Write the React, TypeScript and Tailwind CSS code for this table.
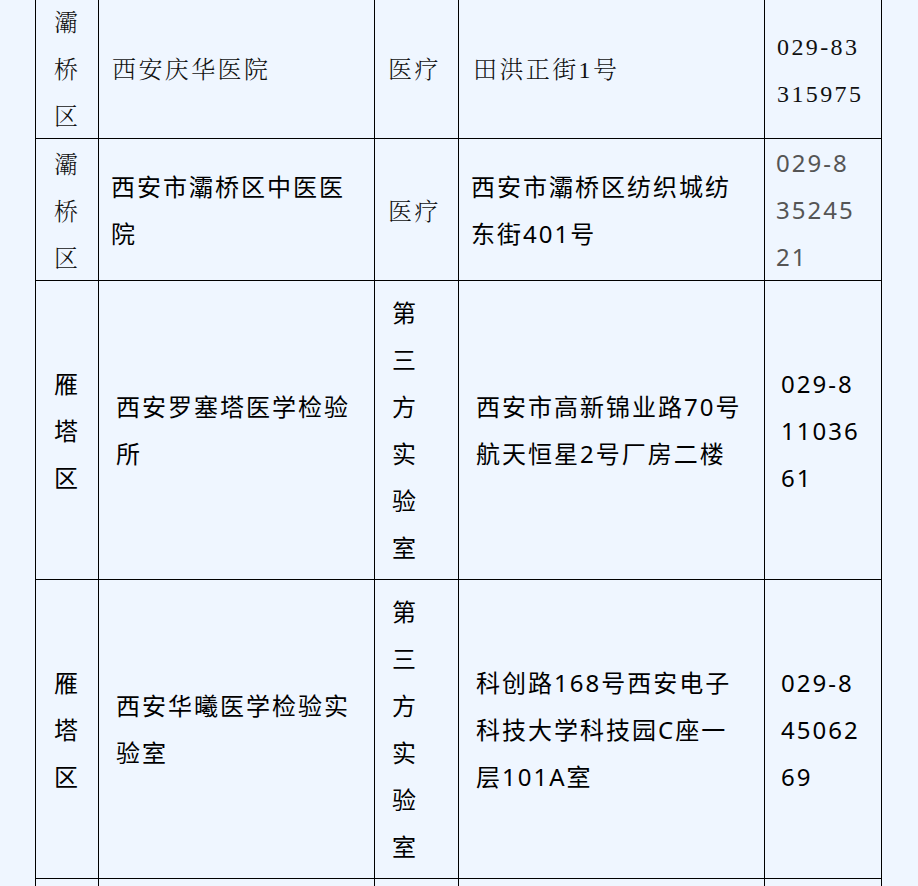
import React from "react";

const serif =
  "font-['Liberation_Serif','Noto_Serif_CJK_SC','Noto_Sans_CJK_SC',serif] font-light text-[#111] tracking-[2.4px] pt-[6px]";
const sans = "font-['Noto_Sans','Noto_Sans_CJK_SC',sans-serif] text-black";

function Cell({
  children,
  className = "",
  last = false,
}: {
  children?: React.ReactNode;
  className?: string;
  last?: boolean;
}) {
  return (
    <div
      className={
        "flex items-center border-l border-t border-black min-w-0 " +
        (last ? "border-r " : "") +
        className
      }
    >
      {children}
    </div>
  );
}

function Lines({ lines }: { lines: string[] }) {
  return (
    <div className="flex flex-col">
      {lines.map((l, i) => (
        <span key={i} className="block whitespace-nowrap">
          {l}
        </span>
      ))}
    </div>
  );
}

function Stack({ text }: { text: string }) {
  return <p className="mx-auto w-[26px] break-all">{text}</p>;
}

function StackLeft({ text }: { text: string }) {
  return <p className="w-[26px] break-all">{text}</p>;
}

export default function App() {
  return (
    <div className="h-[886px] w-full overflow-hidden bg-[#eff6ff]">
      <div className="-mt-[4px] ml-[35px] grid grid-cols-[63px_276px_84px_306px_118px] grid-rows-[142px_142px_299px_299px_120px] text-[24px] leading-[47px] tracking-[2px]">
        {/* Row 1 */}
        <Cell className={serif}>
          <Stack text="灞桥区" />
        </Cell>
        <Cell className={serif + " pl-[13px]"}>
          <span>西安庆华医院</span>
        </Cell>
        <Cell className={serif + " pl-[13px]"}>
          <span className="whitespace-nowrap">医疗</span>
        </Cell>
        <Cell className={serif + " pl-[14px]"}>
          <span>田洪正街1号</span>
        </Cell>
        <Cell last className={serif + " pl-[12px]"}>
          <Lines lines={["029-83", "315975"]} />
        </Cell>

        {/* Row 2 */}
        <Cell className={serif}>
          <Stack text="灞桥区" />
        </Cell>
        <Cell className={sans + " pl-[12px]"}>
          <Lines lines={["西安市灞桥区中医医", "院"]} />
        </Cell>
        <Cell className={serif + " pl-[13px]"}>
          <span className="whitespace-nowrap">医疗</span>
        </Cell>
        <Cell className={sans + " pl-[12px]"}>
          <Lines lines={["西安市灞桥区纺织城纺", "东街401号"]} />
        </Cell>
        <Cell last className={"font-['Noto_Sans','Noto_Sans_CJK_SC',sans-serif] text-[#555] pl-[11px]"}>
          <Lines lines={["029-8", "35245", "21"]} />
        </Cell>

        {/* Row 3 */}
        <Cell className={sans}>
          <Stack text="雁塔区" />
        </Cell>
        <Cell className={sans + " pl-[17px]"}>
          <Lines lines={["西安罗塞塔医学检验", "所"]} />
        </Cell>
        <Cell className={sans + " pl-[17px]"}>
          <StackLeft text="第三方实验室" />
        </Cell>
        <Cell className={sans + " pl-[17px]"}>
          <Lines lines={["西安市高新锦业路70号", "航天恒星2号厂房二楼"]} />
        </Cell>
        <Cell last className={sans + " pl-[16px]"}>
          <Lines lines={["029-8", "11036", "61"]} />
        </Cell>

        {/* Row 4 */}
        <Cell className={sans}>
          <Stack text="雁塔区" />
        </Cell>
        <Cell className={sans + " pl-[17px]"}>
          <Lines lines={["西安华曦医学检验实", "验室"]} />
        </Cell>
        <Cell className={sans + " pl-[17px]"}>
          <StackLeft text="第三方实验室" />
        </Cell>
        <Cell className={sans + " pl-[17px]"}>
          <Lines lines={["科创路168号西安电子", "科技大学科技园C座一", "层101A室"]} />
        </Cell>
        <Cell last className={sans + " pl-[16px]"}>
          <Lines lines={["029-8", "45062", "69"]} />
        </Cell>

        {/* Row 5 (cut off) */}
        <Cell />
        <Cell />
        <Cell />
        <Cell />
        <Cell last />
      </div>
    </div>
  );
}
